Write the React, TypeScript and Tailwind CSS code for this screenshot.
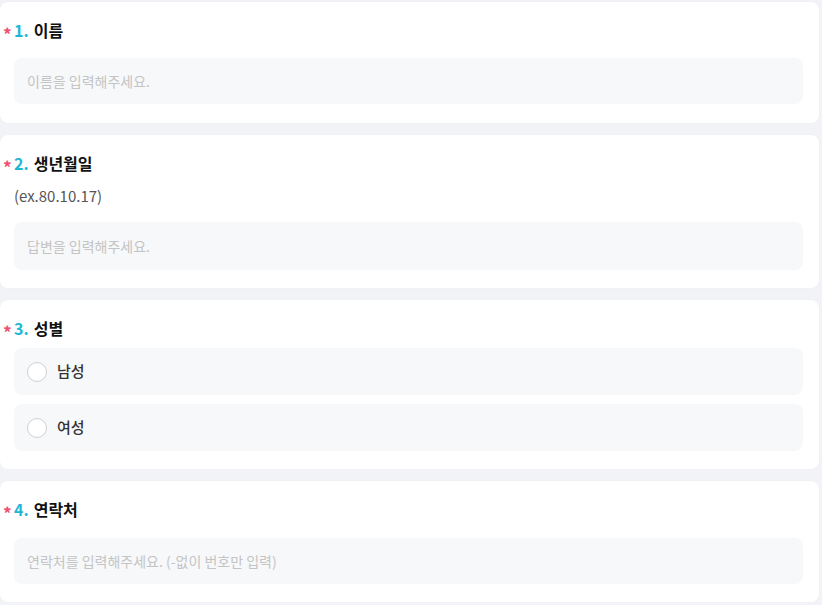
import React from "react";

const font = { fontFamily: '"Noto Sans CJK KR", "Noto Sans", sans-serif' };

function Title({ n, label }: { n: string; label: string }) {
  return (
    <div className="flex items-center h-[20px] -ml-[12px]">
      <span className="w-[12px] pl-[1px] text-[17px] font-bold text-[#f0506e] leading-none pt-[6px]">*</span>
      <span className="text-[16px] font-bold text-[#1fb6d6] mr-[5px]">{n}.</span>
      <span className="text-[16px] font-bold text-[#111]">{label}</span>
    </div>
  );
}

function Input({ ph, className = "" }: { ph: string; className?: string }) {
  return (
    <div className={"h-[46px] rounded-[8px] bg-[#f7f8fa] flex items-center px-[13px] text-[14px] text-[#c4c4c4] " + className}>
      {ph}
    </div>
  );
}

function Option({ label, className = "" }: { label: string; className?: string }) {
  return (
    <div className={"h-[47px] rounded-[8px] bg-[#f7f8fa] flex items-center px-[13px] " + className}>
      <span className="w-[20px] h-[20px] rounded-full border-[1.5px] border-[#cfcfcf] bg-white" />
      <span className="ml-[10px] text-[15px] text-[#333] font-medium">{label}</span>
    </div>
  );
}

export default function App() {
  return (
    <div className="w-[822px] h-[605px] bg-[#f2f3f7] overflow-hidden" style={font}>
      <div className="pt-[2px] flex flex-col gap-[12px] w-[819px]">
        <div className="bg-white rounded-[8px] pl-[14px] pr-[16px] pt-[18px] pb-[19px] shadow-[0_0_2px_rgba(0,0,0,0.04)]">
          <Title n="1" label="이름" />
          <Input ph="이름을 입력해주세요." className="mt-[18px]" />
        </div>
        <div className="bg-white rounded-[8px] pl-[14px] pr-[16px] pt-[18px] pb-[18px] shadow-[0_0_2px_rgba(0,0,0,0.04)]">
          <Title n="2" label="생년월일" />
          <div className="mt-[13px] h-[20px] flex items-center text-[15px] text-[#555]">(ex.80.10.17)</div>
          <Input ph="답변을 입력해주세요." className="mt-[16px] h-[48px]" />
        </div>
        <div className="bg-white rounded-[8px] pl-[14px] pr-[16px] pt-[18px] pb-[18px] shadow-[0_0_2px_rgba(0,0,0,0.04)]">
          <Title n="3" label="성별" />
          <Option label="남성" className="mt-[10px]" />
          <Option label="여성" className="mt-[9px]" />
        </div>
        <div className="bg-white rounded-[8px] pl-[14px] pr-[16px] pt-[18px] pb-[18px] shadow-[0_0_2px_rgba(0,0,0,0.04)]">
          <Title n="4" label="연락처" />
          <Input ph="연락처를 입력해주세요. (-없이 번호만 입력)" className="mt-[19px]" />
        </div>
      </div>
    </div>
  );
}
